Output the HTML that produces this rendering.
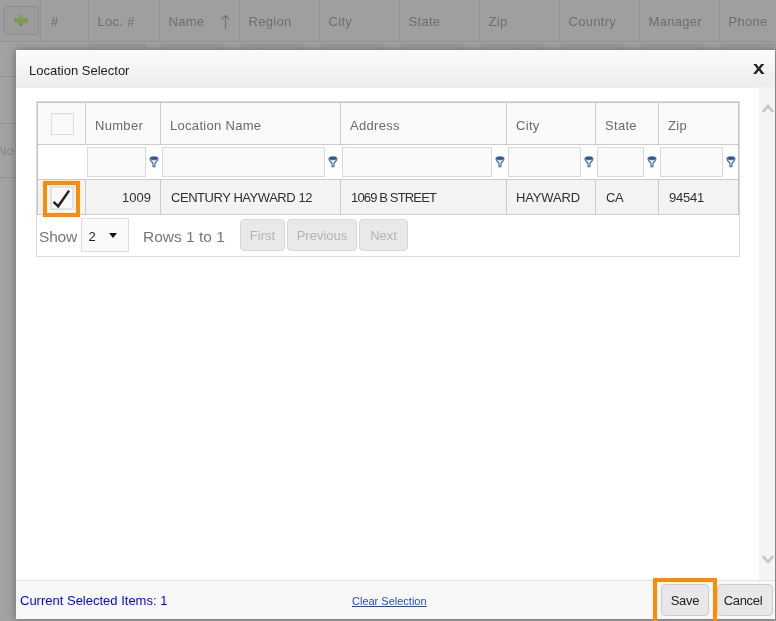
<!DOCTYPE html>
<html><head><meta charset="utf-8"><title>Location Selector</title>
<style>
*{box-sizing:border-box;margin:0;padding:0}
html,body{width:776px;height:621px;overflow:hidden;background:#fff;font-family:"Liberation Sans",sans-serif;font-size:13px;color:#333}
.abs{position:absolute}
#bg,#dlg{will-change:transform}
#bg{position:absolute;left:0;top:0;width:776px;height:621px;background:#a2a2a2;overflow:hidden}
#bg .hdr{position:absolute;left:0;top:0;width:776px;height:42px;background:#9f9f9f;border-bottom:1px solid #949494}
#bg .hc{position:absolute;top:0;height:41px;border-left:1px solid #949494;color:#6e6e6e;font-size:13px;line-height:43px;padding-left:8.5px;white-space:nowrap;letter-spacing:0.3px}
#bg .fi{position:absolute;top:44px;height:30px;border:1px solid #959595;background:#9f9f9f}
#bg .hl{position:absolute;left:0;width:776px;height:1px;background:#929292}
#bg .addbtn{position:absolute;left:3px;top:6px;width:36px;height:29px;border:1px solid #8e8e8e;border-radius:4px;background:#9c9c9c}
#bg .addbtn i{position:absolute;background:#7c9a53}
#dlg{position:absolute;left:16px;top:50px;width:759px;height:569px;background:#fff;box-shadow:0 0 8px 0 rgba(0,0,0,.36)}
#tb{position:absolute;left:0;top:0;width:759px;height:38px;background:linear-gradient(#fbfbfb,#ececec);}
#tb .t{position:absolute;left:13px;top:1px;line-height:40px;font-size:13px;color:#222}
#tb .x{position:absolute;left:737px;top:7.5px;font-size:17.5px;font-weight:bold;color:#222;line-height:20px;transform:scaleX(1.2);transform-origin:0 0}
#sb{position:absolute;left:743px;top:37px;width:16px;height:493px;background:#f4f4f4}
#ft{position:absolute;left:0;top:530px;width:759px;height:39px;background:#f8f8f8;border-top:1px solid #e2e2e2}
.btn{position:absolute;height:32px;border:1px solid #ccc;border-radius:4px;background:#e8e8e8;font-size:13px;line-height:32px;text-align:center;color:#222}
.btn.dis{color:#b4b4b4;background:#e9e9e9;border-color:#d6d6d6}
.ob{position:absolute;border:4px solid #ff8c00}
#grid{position:absolute;left:20px;top:51px;width:704px;height:156px;border:2px solid transparent;border-bottom:1px solid transparent;background:#fff;background-clip:padding-box}
#grid .hd{position:absolute;left:0;top:0;width:700px;height:42px;background:#fafafa;border-bottom:1px solid #ccc}
#grid .c{position:absolute;top:0;height:41px;line-height:46px;padding-left:9px;border-left:1px solid #ccc;color:#6a6a6a;letter-spacing:0.3px;font-size:13px;white-space:nowrap}
#grid .fl{position:absolute;top:44px;height:30px;border:1px solid #d9d9d9;background:#fafafa}
#grid .row{position:absolute;left:0;top:76px;width:700px;height:36px;background:#f3f3f3;border-top:1px solid #ccc;border-bottom:1px solid #ccc}
#grid .d{position:absolute;top:0;height:34px;line-height:35px;padding-left:10px;border-left:1px solid #ccc;color:#303030;font-size:13px;white-space:nowrap;letter-spacing:-0.45px}
.fn{position:absolute;top:52.6px}
</style></head><body>
<div id="bg">
  <div class="hdr"></div>
  <div class="addbtn"><i style="left:15px;top:7px;width:4.4px;height:12.4px;background:linear-gradient(#86a45c,#73924a)"></i><i style="left:10.4px;top:11.4px;width:13.4px;height:4.2px"></i></div>
  <div class="hc" style="left:40px;width:48px;padding-left:10px">#</div>
  <div class="hc" style="left:88px;width:72px">Loc. #</div>
  <div class="hc" style="left:159px;width:80px">Name<svg style="position:absolute;left:60px;top:14px" width="11" height="16" viewBox="0 0 11 16"><path d="M5.5 15 V1.5 M1.5 5.5 L5.5 1.5 L9.5 5.5" fill="none" stroke="#747474" stroke-width="1.2"/></svg></div>
  <div class="hc" style="left:239px;width:80px">Region</div>
  <div class="hc" style="left:319px;width:80px">City</div>
  <div class="hc" style="left:399px;width:80px">State</div>
  <div class="hc" style="left:479px;width:80px">Zip</div>
  <div class="hc" style="left:559px;width:80px">Country</div>
  <div class="hc" style="left:639px;width:80px">Manager</div>
  <div class="hc" style="left:719px;width:80px">Phone</div>
  <div class="fi" style="left:89px;width:56px"></div>
  <div class="fi" style="left:161px;width:63px"></div>
  <div class="fi" style="left:241px;width:63px"></div>
  <div class="fi" style="left:321px;width:63px"></div>
  <div class="fi" style="left:401px;width:63px"></div>
  <div class="fi" style="left:481px;width:63px"></div>
  <div class="fi" style="left:561px;width:63px"></div>
  <div class="fi" style="left:641px;width:63px"></div>
  <div class="fi" style="left:721px;width:63px"></div>
  <div class="hl" style="top:76px"></div>
  <div class="hl" style="top:123px"></div>
  <div class="hl" style="top:177px"></div>
  <div class="abs" style="left:-3px;top:143px;font-size:13px;line-height:16px;color:#888">No</div>
</div>
<div id="dlg">
  <div id="tb"><span class="t">Location Selector</span><span class="x">x</span></div>
  <div id="sb">
    <svg class="abs" style="left:3px;top:17px" width="12" height="9" viewBox="0 0 12 9"><path d="M0.8 7.8 L6 2.2 L11.2 7.8" fill="none" stroke="#c6c6c6" stroke-width="2.5"/></svg>
    <svg class="abs" style="left:3px;top:468px" width="12" height="9" viewBox="0 0 12 9"><path d="M0.8 1.2 L6 6.8 L11.2 1.2" fill="none" stroke="#c6c6c6" stroke-width="2.5"/></svg>
  </div>
  <div id="grid">
    <div class="abs" style="left:-2px;top:-2px;width:704px;height:156px;border:1px solid #dadada"></div>
    <div class="abs" style="left:-1px;top:-1px;width:702px;height:113px;border:1px solid #c6c6c6"></div>
    <div class="hd"></div>
    <div class="abs" style="left:13px;top:10px;width:23px;height:22px;border:1px solid #ddd;background:#fafafa;box-shadow:inset 0 1px 1px #f2f2f2"></div>
    <div class="c" style="left:47px;width:75px">Number</div>
    <div class="c" style="left:122px;width:180px">Location Name</div>
    <div class="c" style="left:302px;width:166px">Address</div>
    <div class="c" style="left:468px;width:89px">City</div>
    <div class="c" style="left:557px;width:63px">State</div>
    <div class="c" style="left:620px;width:80px">Zip</div>
    <div class="fl" style="left:49px;width:59px"></div>
    <div class="fl" style="left:124px;width:163px"></div>
    <div class="fl" style="left:304px;width:150px"></div>
    <div class="fl" style="left:470px;width:73px"></div>
    <div class="fl" style="left:559px;width:47px"></div>
    <div class="fl" style="left:622px;width:63px"></div>
<svg class="fn" style="left:110.9px" width="10" height="12" viewBox="0 0 10 12"><path d="M0.9 2.8 C1.1 5.6 4 5.9 4 8 V10.7 H5.9 V8 C5.9 5.9 8.8 5.6 9 2.8" fill="#f4f7fc" stroke="#3d639b" stroke-width="1.1"/><ellipse cx="4.95" cy="2.25" rx="4.15" ry="1.75" fill="#2e5692" stroke="#6787ba" stroke-width="0.7"/></svg><svg class="fn" style="left:290.4px" width="10" height="12" viewBox="0 0 10 12"><path d="M0.9 2.8 C1.1 5.6 4 5.9 4 8 V10.7 H5.9 V8 C5.9 5.9 8.8 5.6 9 2.8" fill="#f4f7fc" stroke="#3d639b" stroke-width="1.1"/><ellipse cx="4.95" cy="2.25" rx="4.15" ry="1.75" fill="#2e5692" stroke="#6787ba" stroke-width="0.7"/></svg><svg class="fn" style="left:457.4px" width="10" height="12" viewBox="0 0 10 12"><path d="M0.9 2.8 C1.1 5.6 4 5.9 4 8 V10.7 H5.9 V8 C5.9 5.9 8.8 5.6 9 2.8" fill="#f4f7fc" stroke="#3d639b" stroke-width="1.1"/><ellipse cx="4.95" cy="2.25" rx="4.15" ry="1.75" fill="#2e5692" stroke="#6787ba" stroke-width="0.7"/></svg><svg class="fn" style="left:545.9px" width="10" height="12" viewBox="0 0 10 12"><path d="M0.9 2.8 C1.1 5.6 4 5.9 4 8 V10.7 H5.9 V8 C5.9 5.9 8.8 5.6 9 2.8" fill="#f4f7fc" stroke="#3d639b" stroke-width="1.1"/><ellipse cx="4.95" cy="2.25" rx="4.15" ry="1.75" fill="#2e5692" stroke="#6787ba" stroke-width="0.7"/></svg><svg class="fn" style="left:608.9px" width="10" height="12" viewBox="0 0 10 12"><path d="M0.9 2.8 C1.1 5.6 4 5.9 4 8 V10.7 H5.9 V8 C5.9 5.9 8.8 5.6 9 2.8" fill="#f4f7fc" stroke="#3d639b" stroke-width="1.1"/><ellipse cx="4.95" cy="2.25" rx="4.15" ry="1.75" fill="#2e5692" stroke="#6787ba" stroke-width="0.7"/></svg><svg class="fn" style="left:688.4px" width="10" height="12" viewBox="0 0 10 12"><path d="M0.9 2.8 C1.1 5.6 4 5.9 4 8 V10.7 H5.9 V8 C5.9 5.9 8.8 5.6 9 2.8" fill="#f4f7fc" stroke="#3d639b" stroke-width="1.1"/><ellipse cx="4.95" cy="2.25" rx="4.15" ry="1.75" fill="#2e5692" stroke="#6787ba" stroke-width="0.7"/></svg>
    <div class="row">
      <div class="d" style="left:47px;width:75px;text-align:right;padding-right:9px;letter-spacing:0">1009</div>
      <div class="d" style="left:122px;width:180px">CENTURY HAYWARD 12</div>
      <div class="d" style="left:302px;width:166px;letter-spacing:-0.85px">1069 B STREET</div>
      <div class="d" style="left:468px;width:89px;padding-left:9px;letter-spacing:-0.15px">HAYWARD</div>
      <div class="d" style="left:557px;width:63px">CA</div>
      <div class="d" style="left:620px;width:80px;letter-spacing:-0.2px">94541</div>
    </div>
    <div class="abs" style="left:9px;top:82px;width:29px;height:28px;background:#f1f6fb"></div><div class="abs" style="left:12px;top:83px;width:24px;height:24px;border:1px dotted #cfcfcf;background:#f9f9f9;box-shadow:inset 0 0 0 1px #e4e4e4"></div>
    <svg class="abs" style="left:14px;top:85px" width="22" height="22" viewBox="0 0 22 22"><path d="M1.6 13.9 L6.2 18.3 L17.1 2.6" fill="none" stroke="#222" stroke-width="2.5"/></svg>
    <div class="abs" style="left:1px;top:124px;font-size:15.5px;color:#777;line-height:20px;letter-spacing:-0.2px">Show</div>
    <div class="abs" style="left:43px;top:115px;width:48px;height:34px;border:1px solid #ddd;background:#fafafa"><span class="abs" style="left:6.6px;top:10px;font-size:13px;line-height:16px;color:#222">2</span><i class="abs" style="left:26.5px;top:14px;border-left:4.3px solid transparent;border-right:4.3px solid transparent;border-top:5px solid #111"></i></div>
    <div class="abs" style="left:105px;top:124px;font-size:15.5px;color:#777;line-height:20px;white-space:nowrap;letter-spacing:0">Rows 1 to 1</div>
    <div class="btn dis" style="left:202px;top:116px;width:45px">First</div>
    <div class="btn dis" style="left:249px;top:116px;width:70px">Previous</div>
    <div class="btn dis" style="left:321px;top:116px;width:49px">Next</div>
  </div>
  <div class="ob" style="left:27px;top:131px;width:37px;height:36px"></div>
  <div id="ft">
    <span class="abs" style="left:4px;top:12px;font-size:13px;color:#0000ff;line-height:16px;white-space:nowrap">Current Selected Items: 1</span>
    <span class="abs" style="left:336px;top:13px;font-size:11px;color:#1e4fc0;text-decoration:underline;line-height:14px;white-space:nowrap">Clear Selection</span>
    <div class="btn" style="left:645px;top:3px;width:48px;letter-spacing:-0.25px">Save</div>
    <div class="btn" style="left:701px;top:3px;width:56px;letter-spacing:-0.3px;padding-right:4px">Cancel</div>
  </div>
  <div class="ob" style="left:637px;top:528px;width:64px;height:50px"></div>
</div>
</body></html>
